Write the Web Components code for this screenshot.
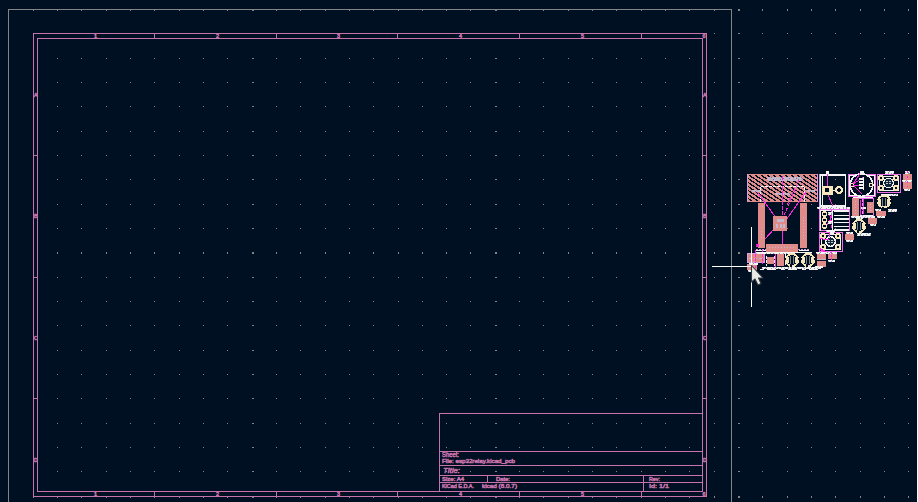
<!DOCTYPE html>
<html lang="en"><head><meta charset="utf-8"><title>PCB Editor</title>
<style>html,body{margin:0;width:918px;height:502px;overflow:hidden;background:#001023}</style></head>
<body><pcb-canvas><board-grid></board-grid><drawing-sheet></drawing-sheet><board-footprints></board-footprints><cross-cursor></cross-cursor></pcb-canvas>
<script>
class PcbCanvas extends HTMLElement{
  constructor(){super();this.attachShadow({mode:'open'}).innerHTML=
  '<style>:host{display:grid;width:918px;height:502px;overflow:hidden;background:#001023;border-right:1px solid #f4f6f8;box-sizing:border-box}::slotted(*){grid-area:1/1}</style><slot></slot>';}
}
customElements.define('pcb-canvas',PcbCanvas);

class Layer extends HTMLElement{
  constructor(){super();this.attachShadow({mode:'open'}).innerHTML=
  `<style>:host{display:block;width:918px;height:502px}svg{display:block}text{font-family:"Liberation Sans",Arial,sans-serif}</style>
  <svg width="918" height="502" viewBox="0 0 918 502" shape-rendering="crispEdges">${this.draw()}</svg>`;}
}
const box=(x,y,w,h,f)=>`<rect x="${x}" y="${y}" width="${w}" height="${h}" fill="${f}"/>`;
const frame=(x,y,x2,y2,c)=>`<path d="M${x+.5} ${y+.5}H${x2+.5}V${y2+.5}H${x+.5}Z" fill="none" stroke="${c}"/>`;
const line=(d,c,w=1,dash='')=>`<path d="${d}" fill="none" stroke="${c}" stroke-width="${w}" ${dash?`stroke-dasharray="${dash}"`:''}/>`;

customElements.define('board-grid',class extends Layer{
  draw(){let s='';
    for(let j=0;j<21;j++)for(let i=0;i<38;i++){
      s+=box(Math.floor(8.9+24.32*i),Math.floor(9.6+24.33*j),i%10==0&&i?2:1,j%10==0?2:1,'#848484');}
    return s;}
});

customElements.define('drawing-sheet',class extends Layer{
  draw(){const P='#c872ab';
    let s=frame(8,9,731,520,'#848484')+frame(33,33,706,496,P)+frame(37,38,702,491,P);
    for(const x of [154,276,397,519,641])s+=box(x,34,1,4,P)+box(x,492,1,4,P);
    for(const y of [155,277,398])s+=box(34,y,3,1,P)+box(703,y,3,1,P);
    s+=box(439,413,1,78,P)+box(439,413,263,1,P);
    for(const y of [451,465,475,482])s+=box(439,y,263,1,P);
    s+=box(487,475,1,7,P)+box(643,475,1,16,P);
    const t=(x,y,w,z,v,i='')=>`<text x="${x}" y="${y}" textLength="${w}" lengthAdjust="spacingAndGlyphs" font-size="${z}" fill="${P}" stroke="${P}" stroke-width=".55" ${i}>${v}</text>`;
    s+=t(442,457,17,7,'Sheet:')+t(442,463.4,73,6,'File: esp32relay.kicad_pcb')+t(443,473.2,17,8,'Title:','font-style="italic"')
     +t(442,481,22,5.5,'Size: A4')+t(496,481,14,5.5,'Date:')+t(442,488,32,6,'KiCad E.D.A.')+t(482,488,35,6,'kicad (8.0.7)')
     +t(649,481,11,5.5,'Rev:')+t(649,488,20,6,'Id: 1/1');
    [95,217,338,460,582,703.5].forEach((x,i)=>{s+=t(x-1,38,3,5,i+1)+t(x-1,496,3,5,i+1)});
    [97,218,340,462].forEach((y,i)=>{s+=t(34,y,3.6,5,'ABCD'[i])+t(703,y,3.6,5,'ABCD'[i])});
    return s;}
});

customElements.define('board-footprints',class extends Layer{
  draw(){
    const R='#df8b89',W='#f4f4f4',M='#ff26e2',Y='#f070ec',V='#d4a0e0',C='#f7e6bd',N='#001023',L='#c4b8cf';
    const pads=(...a)=>a.map(p=>box(...p,R)).join('');
    const hole=(x,y,r=3,h=1.2)=>`<circle cx="${x}" cy="${y}" r="${r}" fill="${C}"/><circle cx="${x}" cy="${y}" r="${h}" fill="${N}"/>`;
    const scrib=(x,y,w,h=2,c=W)=>`<rect x="${x}" y="${y}" width="${w}" height="${h}" fill="${c}" opacity=".6"/>`
      +line(`M${x} ${y+.5}H${x+w}`,c,1,'4 1 6 1 2 1')+(h>1?line(`M${x+1} ${y+1.5}H${x+w}`,c,1,'2 1 5 1 3 1'):'')+(h>2?line(`M${x} ${y+2.5}H${x+w-1}`,c,1,'3 1 2 1 6 1'):'');
    const cap=(x,y)=>`<circle cx="${x}" cy="${y}" r="6" fill="${N}" stroke="${C}" stroke-width="2"/>`
      +line(`M${x-4} ${y-3}V${y+3}M${x+4} ${y-3}V${y+3}`,C,2)+line(`M${x-1.5} ${y-4}V${y+4}M${x+1.5} ${y-4}V${y+4}`,'#77858d')
      +scrib(x-3,y-8,7,1)+line(`M${x-7} ${y-2}v2M${x+7} ${y-2}v2M${x-2} ${y+6}h2`,N,2);
    const sw=(x,y,w,h)=>frame(x,y,x+w,y+h,Y)+frame(x+2,y+2,x+w-2,y+h-2,W)
      +hole(x+4,y+4)+hole(x+w-4,y+4)+hole(x+4,y+h-4)+hole(x+w-4,y+h-4)
      +`<circle cx="${x+w/2}" cy="${y+h/2}" r="4.8" fill="#14283a" stroke="${W}" stroke-width="1.3"/>`
      +line(`M${x+w/2-3} ${y+h/2-1.5}h6m-6 2h5`,'#c4ccd0',1,'2 1');
    let s=`<defs><pattern id="h" width="6" height="4" patternUnits="userSpaceOnUse">${box(0,0,6,4,R)}${box(0,0,2,1,N)+box(1,1,3,1,N)+box(3,2,2,1,N)+box(5,3,1,1,N)+box(0,3,1,1,N)}</pattern></defs>`;
    // WiFi module: antenna keepout, edge pads, thermal pad
    s+=box(747,174,71,28,'url(#h)')+frame(747,174,817,201,R)
      +line('M747.5 174V202M817.5 174V202',V)
      +line('M760.5 202V186.5H805M804.5 187V202',W,1,'3 1')
      +scrib(767,177,36,3,L)+scrib(768,180,34,1,L)+scrib(775,193,15,2,L)+scrib(752,190,9,2,L)+scrib(807,190,8,2,L)
      +line('M757.5 192L776 218M806 192L786 220M774 229L765 239',M)+line('M799 180L783 218M795 188L787 205',M,1,'3 2')
      +line('M782.5 176V250',M,1,'4 1')
      +pads([758,203,7,45],[800,203,7,45],[766,244,32,8],[773,216,14,15])
      +line('M762 206.5h3M802 206.5h3M761.5 231v9M803.5 217v24M769 247.5h26',L,1,'1 2')
      +box(777,219,7,3,L)+box(776,224,2,4,L)+box(780,224,2,4,L)+box(783,224,2,4,L)
      +line('M756 250.5h10M799 250.5h10M756 252.5h54',W)+line('M756 249.5h53',V,1,'2 1')+pads([766,244,32,7])+line('M769 247.5h26',L,1,'1 2')+scrib(756,244,3,3,M)+line('M782.5 231v13',M);
    // Screw terminal
    s+=line('M821 175H846M821 206H846',W,2)+line('M820.5 174V207M845.5 174V207',W,1)+line('M819.5 174V207',V)+line('M822.5 176V206',W)
      +box(822,186,11,9,C)+box(825,188,4,4,N)+hole(839,190,4,1.8)+line('M833 190.5h2',W)
      +line('M827.5 171V186M828 195L833 206',M)+box(826,171,3,3,W)+scrib(817,207,33,2);
    // Buzzer
    s+=frame(848,174,875,196,Y)+frame(849,175,874,195,W)+`<circle cx="861.5" cy="185" r="11.3" fill="${N}" stroke="${W}" stroke-width="1.6"/>`
      +hole(852,185,2.5)+hole(871,185,2.5)+line('M853 184L861 172M853 184L864 177M853 185L862 194M853 185H859',M)
      +box(859,178,5,2,W)+box(859,181,5,2,W)+box(859,184,5,2,W)+box(859,187,5,2,W)+line('M863.5 177V190',W)+box(860,171,4,3,W)+scrib(853,197,16);
    // Tactile switch, upper right
    s+=sw(877,174,23,18)+scrib(885,171,9,3)+scrib(882,194,16,2);
    s+=pads([903,174,9,6],[903,182,9,7])+scrib(905,171,5,3)+scrib(902,180,10,2)+scrib(904,189,6)+line('M907.5 171V187',M,1,'2 3');
    // Diode
    s+=frame(852,198,873,216,Y)+line('M853 197.5H873M860 215.5H873',W)+pads([852,198,7,18],[867,202,7,11])
      +line('M860.5 200V215M863.5 199V214',M)+line('M861 207.5h5',W,2)+line('M862.5 199V216',V,1,'3 1')+line('M855.5 201V214M870.5 204V212',L,1,'1 2');
    s+=cap(884,201.5)+scrib(888,209,9,3)+scrib(875,209,6)+pads([876,211,10,5])+scrib(877,216,8);
    // Pin header
    s+=frame(819,209,849,230,Y)+line('M821 210.5H848M820.5 210V231M832.5 210V230',W)
      +hole(824.5,214)+hole(824.5,220)+hole(824.5,226)
      +box(834,210,15,2,W)+box(834,215,15,1,W)+box(834,218,15,2,W)+box(834,222,15,1,W)+box(834,226,15,1,W)+box(834,229,15,2,W)
      +line('M829 212L831 219L827 225',M)+line('M831.5 210V230',M,1,'3 2')+scrib(828,212,4,3)+scrib(828,221,4,3);
    s+=cap(859,226)+scrib(851,216,16)+pads([868,218,9,6])+scrib(867,216,8)+scrib(870,224,6)+scrib(857,233,14,3)
      +pads([845,234,9,6])+scrib(846,232,7)+scrib(846,240,7);
    // Tactile switch, lower
    s+=scrib(826,230,9,2)+sw(819,232,23,19)+box(829,230,5,4,W)+line('M820 238.5L829 240M829 232V237',M)+line('M820 249L826 252',M,2);
    // Bottom row of passives
    s+=pads([817,254,9,6],[817,261,9,6],[828,254,9,5])+scrib(816,252,21)+scrib(817,259,9,1,L)+scrib(828,260,7)+scrib(815,266,8,2)+line('M831.5 252v8',M,1,'2 1')
      +pads([747,254,18,9],[747,264,10,6],[767,257,7,7],[777,254,7,12])
      +frame(747,253,764,262,V)+line('M749 258.5h15',L,1,'3 2')+line('M755.5 250V268M762.5 250V264',M,1,'3 1')
      +scrib(757,252,33,2)+line('M766.5 256V266M774.5 256V266M785.5 254V266',W,1,'3 1')+line('M775.5 254V267',M)
      +cap(792,260)+cap(808,260)+scrib(762,267,59,2)+line('M760 269.5h58',W,1,'4 3 9 5')+scrib(749,263,9,2)+scrib(748,270,8,2);
    return s;}
});

customElements.define('cross-cursor',class extends Layer{
  draw(){return box(751,227,1,80,'#fff')+box(712,266,41,1,'#fff')
    +'<g shape-rendering="auto"><path d="M751.5 265.5V282L755 279L758 285L761 283.5L758.5 278H763Z" fill="#eaeae5" stroke="#303840" stroke-width="1.1" stroke-linejoin="round"/></g>';}
});
</script></body></html>
